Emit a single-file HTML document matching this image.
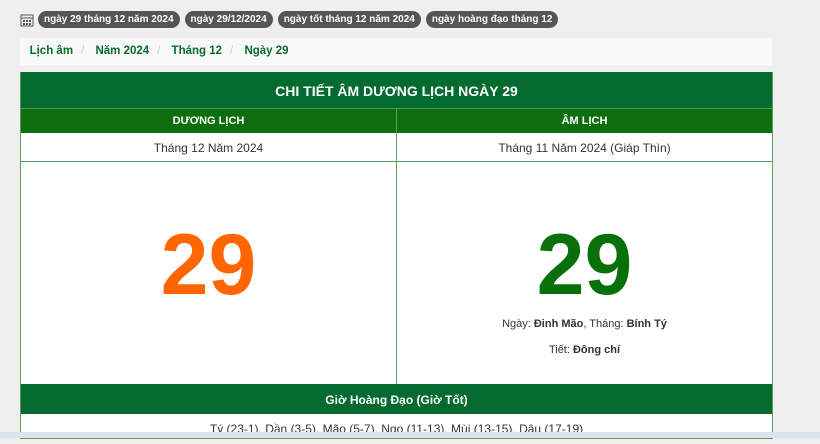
<!DOCTYPE html>
<html><head><meta charset="utf-8"><style>
body{margin:0;width:820px;height:438px;overflow:hidden;background:#efefef;font-family:"Liberation Sans",sans-serif;position:relative}
.tags{position:absolute;top:11px;left:20px;display:flex;align-items:center}
.tag{background:#555;color:#fff;font-size:10px;font-weight:bold;border-radius:9px;height:17px;line-height:17px;padding:0 6px;margin-right:5px;white-space:nowrap}
.bc{position:absolute;left:20px;top:38px;width:752px;height:27px;background:#f8f8f8;font-size:11.5px;font-weight:bold;color:#0a6b2a;line-height:27px}
.bc span.s{color:#ccc;font-weight:normal;margin:0 8px}
.tbl{position:absolute;left:20px;top:72px;width:751px;border:1px solid #5a9e5a;border-top:0;background:#fff}
.title{background:#036a30;color:#fff;text-align:center;font-weight:bold;font-size:14px;height:36px;line-height:38px;border-bottom:1px solid #5f8f5f}
.row{display:flex}
.c{flex:0 0 375px;text-align:center}
.c+.c{flex:1;border-left:1px solid #5a9e5a}
.hd .c{background:#0c6e0c;color:#fff;font-weight:bold;font-size:11px;height:24px;line-height:24px}
.sub .c{height:28px;line-height:31px;font-size:12px;color:#333;border-bottom:1px solid #5a9e5a}
.big .c{height:222px;position:relative}
.n{font-size:86px;font-weight:bold;position:absolute;left:0;right:0}
.info{font-size:11px;color:#333;position:absolute;left:0;right:0}
.gh{background:#036a30;color:#fff;font-weight:bold;font-size:12px;text-align:center;height:30px;line-height:32px}
.gt{font-size:12px;color:#333;text-align:center;height:24px;line-height:30px}
.bar{position:absolute;left:0;right:0;top:432px;height:6px;background:#dde3ea}
</style></head><body>
<div class="tags"><svg width="14" height="14" viewBox="0 0 14 14" style="margin-right:4px"><rect x="1" y="2" width="12" height="11" fill="none" stroke="#555"/><line x1="1" y1="5" x2="13" y2="5" stroke="#555"/><g fill="#555"><rect x="3" y="7" width="2" height="2"/><rect x="6" y="7" width="2" height="2"/><rect x="9" y="7" width="2" height="2"/><rect x="3" y="10" width="2" height="2"/><rect x="6" y="10" width="2" height="2"/><rect x="9" y="10" width="2" height="2"/></g></svg>
<span class="tag">ngày 29 tháng 12 năm 2024</span><span class="tag">ngày 29/12/2024</span><span class="tag">ngày tốt tháng 12 năm 2024</span><span class="tag">ngày hoàng đạo tháng 12</span></div>
<div class="bc">&nbsp;&nbsp;&nbsp;Lịch âm<span class="s">/</span> Năm 2024<span class="s">/</span> Tháng 12<span class="s">/</span> Ngày 29</div>
<div class="tbl">
<div class="title">CHI TIẾT ÂM DƯƠNG LỊCH NGÀY 29</div>
<div class="row hd"><div class="c">DƯƠNG LỊCH</div><div class="c">ÂM LỊCH</div></div>
<div class="row sub"><div class="c">Tháng 12 Năm 2024</div><div class="c">Tháng 11 Năm 2024 (Giáp Thìn)</div></div>
<div class="row big"><div class="c"><div class="n" style="color:#ff6600;top:54px">29</div></div>
<div class="c"><div class="n" style="color:#087008;top:54px">29</div>
<div class="info" style="top:156px">Ngày: <b>Đinh Mão</b>, Tháng: <b>Bính Tý</b></div>
<div class="info" style="top:182px">Tiết: <b>Đông chí</b></div></div></div>
<div class="gh">Giờ Hoàng Đạo (Giờ Tốt)</div>
<div class="gt">Tý (23-1), Dần (3-5), Mão (5-7), Ngọ (11-13), Mùi (13-15), Dậu (17-19)</div>
</div>
<div class="bar"></div>
</body></html>
